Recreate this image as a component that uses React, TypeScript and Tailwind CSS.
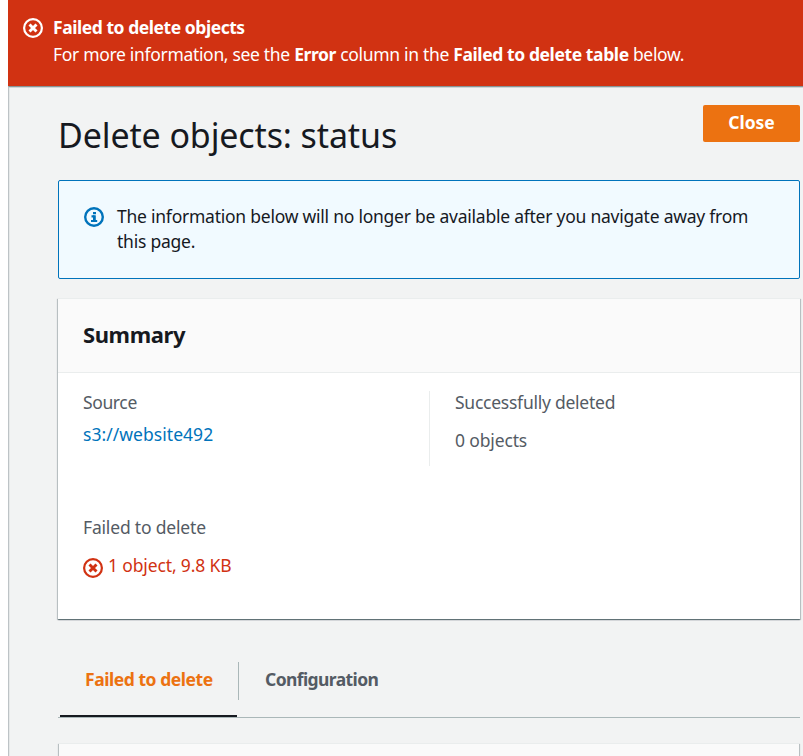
import React from "react";

function ErrorIcon({ className }: { className: string }) {
  return (
    <svg viewBox="0 0 20 20" className={className} fill="none" stroke="currentColor">
      <circle cx="10" cy="10" r="8.9" strokeWidth="2.2" />
      <path d="M6.5 6.5l7 7M13.5 6.5l-7 7" strokeWidth="2.9" />
    </svg>
  );
}

function InfoIcon({ className }: { className: string }) {
  return (
    <svg viewBox="0 0 20 20" className={className} fill="none" stroke="currentColor">
      <circle cx="10" cy="10" r="8.8" strokeWidth="2.4" />
      <path d="M9 6.2h3M7.5 9.4h3" strokeWidth="2.2" />
      <path d="M10.4 8.3v5.5" strokeWidth="2.8" />
      <path d="M7 14h6.2" strokeWidth="2" />
    </svg>
  );
}

const cardShadow =
  "shadow-[0_1px_1px_0_rgba(0,28,36,0.4),1px_1px_1px_0_rgba(0,28,36,0.18),-1px_1px_1px_0_rgba(0,28,36,0.18)]";

export default function App() {
  return (
    <div className="h-[756px] w-[803px] overflow-hidden bg-white pl-2 font-['Noto_Sans','Open_Sans',sans-serif] text-[17.5px] leading-[25px] whitespace-nowrap text-[#16191f]">
      <header className="flex h-[86px] bg-[#d13212] pt-[15px] pl-[15px] text-white">
        <ErrorIcon className="mt-[3px] mr-[10px] size-5 shrink-0" />
        <div>
          <div className="font-bold tracking-[-0.45px]">Failed to delete objects</div>
          <div className="mt-[2px] tracking-[-0.32px]">
            For more information, see the <b className="tracking-[-0.4px]">Error</b> column in the{" "}
            <b className="tracking-[-0.4px]">Failed to delete table</b> below.
          </div>
        </div>
      </header>
      <main className="h-[670px] border-t border-l border-t-[#879596] border-l-[#bdc3c6] bg-[#f2f3f3] pl-[49px] shadow-[inset_0_1px_0_#cfd5d6,inset_1px_0_0_#e6e9e9]">
        <div className="flex h-[93px] w-[742px] items-start justify-between">
          <h1 className="mt-[25px] text-[34px] leading-[46px] tracking-[-0.12px]">Delete objects: status</h1>
          <button className="mt-[18px] flex h-[37px] w-[97px] items-center justify-center rounded-[2px] bg-[#ec7211] pb-[2px] font-bold">
            <span className="text-white">Close</span>
          </button>
        </div>
        <div className="flex h-[99px] w-[742px] rounded-[2px] border border-[#0073bb] bg-[#f1faff] pt-[23px] pl-[25px]">
          <InfoIcon className="mt-[3px] mr-[13px] size-5 shrink-0 text-[#0073bb]" />
          <p className="tracking-[-0.24px]">
            The information below will no longer be available after you navigate away from
            <br />
            this page.
          </p>
        </div>
        <section className={"mt-[19px] h-[321px] w-[742px] border-t border-[#eaeded] bg-white " + cardShadow}>
          <div className="flex h-[74px] items-center border-b border-[#eaeded] bg-[#fafafa] pb-1 pl-[25px]">
            <h2 className="text-[22px] leading-[30px] font-bold tracking-[-0.4px]">Summary</h2>
          </div>
          <div className="grid grid-cols-[371px_371px] pt-[18px] text-[#545b64]">
            <div className="-mt-px h-[125px] pl-[25px]">
              <div className="tracking-[-0.38px]">Source</div>
              <a className="mt-[7px] block tracking-[0.04px] text-[#0073bb]">s3://website492</a>
            </div>
            <div className="h-[75px] border-l border-[#eaeded] pl-[25px]">
              <div className="-mt-px tracking-[-0.25px]">Successfully deleted</div>
              <div className="mt-[13px] tracking-[-0.15px]">0 objects</div>
            </div>
            <div className="pl-[25px]">
              <div className="tracking-[-0.18px]">Failed to delete</div>
              <div className="mt-[13px] flex text-[#d13212]">
                <ErrorIcon className="mt-[5px] mr-[5px] size-5 shrink-0" />
                <span className="tracking-[-0.14px]">1 object, 9.8 KB</span>
              </div>
            </div>
          </div>
        </section>
        <nav className="mt-[42px] flex h-[57px] w-[742px] border-b border-[#aab7b8] pl-[2px] font-bold">
          <div className="h-14 w-[177px] border-b-2 border-[#16191f] pt-[6px] pl-[25px] tracking-[-0.45px] text-[#ec7211]">
            Failed to delete
          </div>
          <div className="mt-px ml-[1px] h-[38px] border-l border-[#aab7b8] pt-[5px] pl-[26px] tracking-[-0.6px] text-[#545b64]">
            Configuration
          </div>
        </nav>
        <section className={"mt-[25px] ml-[1px] h-[40px] w-[740px] border-t border-[#eaeded] bg-[#fafafa] " + cardShadow} />
      </main>
    </div>
  );
}
